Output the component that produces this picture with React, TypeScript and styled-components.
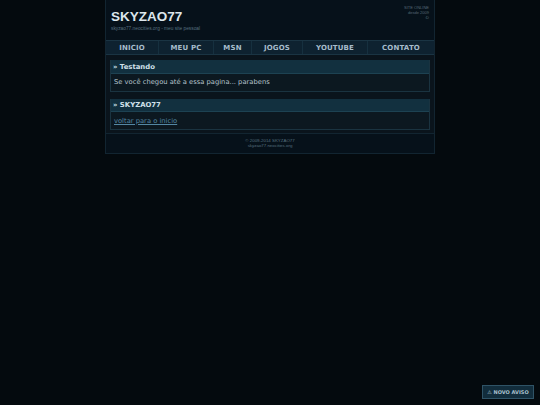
import React from 'react';
import styled, { createGlobalStyle } from 'styled-components';

const GlobalStyle = createGlobalStyle`
  html, body {
    margin: 0;
    padding: 0;
    height: 100%;
    background: #040a0e;
    font-family: 'Liberation Sans', Arial, sans-serif;
  }
`;

const Page = styled.div`
  width: 540px;
  height: 405px;
  position: relative;
  overflow: hidden;
  background: #040a0e;
`;

const Wrapper = styled.div`
  width: 330px;
  box-sizing: border-box;
  margin: 0 auto;
  background: #0a141c;
  border: 1px solid #122531;
  border-top: none;
`;

const Header = styled.header`
  height: 40px;
  box-sizing: border-box;
  padding: 9px 5px 0 5px;
  display: flex;
  justify-content: space-between;
  background: #06111a;
`;

const Logo = styled.h1`
  margin: 0;
  font-size: 13.5px;
  line-height: 16px;
  font-weight: 700;
  color: #dce6ec;
`;

const Tagline = styled.p`
  margin: 1px 0 0;
  font-size: 4.8px;
  line-height: 6px;
  color: #56707f;
`;

const Status = styled.div`
  margin-top: -4px;
  text-align: right;
  font-size: 4px;
  line-height: 5px;
  color: #566a76;
`;

const Nav = styled.nav`
  height: 15px;
  box-sizing: border-box;
  display: flex;
  background: #0e2230;
  border-top: 1px solid #1a3443;
  border-bottom: 1px solid #1a3443;
`;

const NavItem = styled.a<{ $width: number; $last?: boolean }>`
  flex: 0 0 ${props => props.$width}px;
  display: flex;
  align-items: center;
  justify-content: center;
  font-size: 7px;
  font-weight: 700;
  letter-spacing: 0.15px;
  font-family: 'DejaVu Sans', sans-serif;
  color: #a6bccb;
  border-right: ${props => (props.$last ? 'none' : '1px solid #16303f')};
  box-sizing: border-box;
`;

const Content = styled.main`
  padding: 5px 4px 3px;
  display: flex;
  flex-direction: column;
  gap: 7px;
`;

const Box = styled.section`
  border: 1px solid #1a3340;
  border-top: none;
  background: #0c1820;
`;

const BoxTitle = styled.h2`
  margin: 0;
  height: 13.5px;
  box-sizing: border-box;
  padding: 1px 2px 0;
  display: flex;
  align-items: center;
  gap: 2px;
  font-family: 'DejaVu Sans', sans-serif;
  font-size: 6.9px;
  font-weight: 700;
  color: #d0e0ea;
  background: #12303f;
  border-bottom: 1px solid #1d4252;
`;

const BoxBody = styled.div`
  padding: 0 3px;
  height: 17px;
  display: flex;
  align-items: center;
  font-family: 'DejaVu Sans', sans-serif;
  font-size: 6.75px;
  color: #b5c3cc;
`;

const BackLink = styled.a`
  color: #5487a3;
  text-decoration: underline;
`;

const Footer = styled.footer`
  height: 20px;
  box-sizing: border-box;
  border-top: 1px solid #122531;
  background: #06111a;
  padding-top: 4px;
  text-align: center;
  font-size: 4.4px;
  line-height: 5px;
  color: #56707f;
`;

const NoticeButton = styled.a`
  position: absolute;
  left: 482px;
  top: 385px;
  width: 52px;
  height: 14px;
  box-sizing: border-box;
  display: flex;
  align-items: center;
  justify-content: center;
  background: #122d3c;
  border: 1px solid #2f5366;
  font-family: 'DejaVu Sans', sans-serif;
  font-size: 5px;
  font-weight: 700;
  color: #a9c0cd;
`;

const navItems = [
  { label: 'INICIO', width: 53 },
  { label: 'MEU PC', width: 55 },
  { label: 'MSN', width: 38 },
  { label: 'JOGOS', width: 51 },
  { label: 'YOUTUBE', width: 65 },
];

export default function App() {
  return (
    <Page>
      <GlobalStyle />
      <Wrapper>
        <Header>
          <div>
            <Logo>SKYZAO77</Logo>
            <Tagline>skyzao77.neocities.org - meu site pessoal</Tagline>
          </div>
          <Status>
            <div>SITE ONLINE</div>
            <div>desde 2009</div>
            <div>:D</div>
          </Status>
        </Header>
        <Nav>
          {navItems.map(item => (
            <NavItem key={item.label} $width={item.width}>{item.label}</NavItem>
          ))}
          <NavItem $width={66} $last>CONTATO</NavItem>
        </Nav>
        <Content>
          <Box>
            <BoxTitle>» Testando</BoxTitle>
            <BoxBody>Se você chegou até a essa pagina... parabens</BoxBody>
          </Box>
          <Box>
            <BoxTitle>» SKYZAO77</BoxTitle>
            <BoxBody><BackLink>voltar para o inicio</BackLink></BoxBody>
          </Box>
        </Content>
        <Footer>
          <div>© 2009-2014 SKYZAO77</div>
          <div>skyzao77.neocities.org</div>
        </Footer>
      </Wrapper>
      <NoticeButton>⚠ NOVO AVISO</NoticeButton>
    </Page>
  );
}
